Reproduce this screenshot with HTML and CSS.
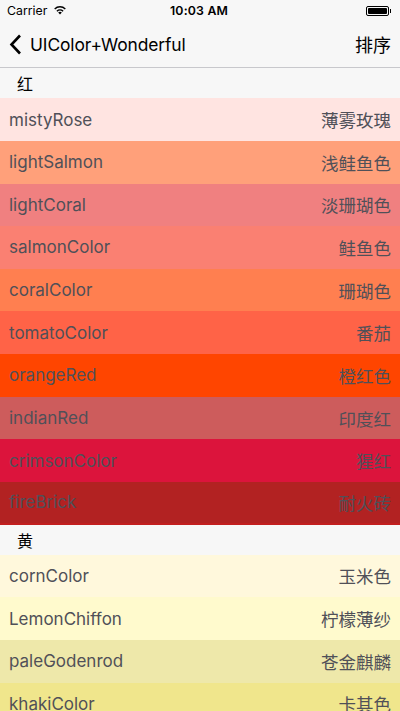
FILE: index.html
```html
<!DOCTYPE html>
<html lang="zh">
<head>
<meta charset="utf-8">
<link rel="stylesheet" href="styles.css">
</head>
<body>
<div class="screen">
  <div class="statusbar">
    <div class="sb-left">
      <span class="carrier">Carrier</span>
      <svg class="wifi" width="14" height="10" viewBox="0 0 14 10">
        <path d="M7 9.6 L5.2 7.6 A2.6 2.6 0 0 1 8.8 7.6 Z" fill="#000"/>
        <path d="M3.4 5.7 A5.2 5.2 0 0 1 10.6 5.7 L9.6 6.8 A3.8 3.8 0 0 0 4.4 6.8 Z" fill="#000"/>
        <path d="M1.2 3.4 A8.3 8.3 0 0 1 12.8 3.4 L11.8 4.5 A6.9 6.9 0 0 0 2.2 4.5 Z" fill="#000"/>
      </svg>
    </div>
    <div class="sb-time">10:03 AM</div>
    <div class="sb-right">
      <span class="battery"><span class="battery-fill"></span></span><span class="battery-nub"></span>
    </div>
  </div>
  <div class="navbar">
    <div class="nav-back">
      <svg class="chev" width="13" height="21" viewBox="0 0 13 21">
        <path d="M11 1.5 L2.5 10.5 L11 19.5" fill="none" stroke="#000" stroke-width="2.6"/>
      </svg>
      <span class="nav-title">UIColor+Wonderful</span>
    </div>
    <span class="nav-action">排序</span>
  </div>
  <div class="list">
    <div class="section-header">红</div>
    <div class="row c-mistyrose"><span>mistyRose</span><span class="cn">薄雾玫瑰</span></div>
    <div class="row c-lightsalmon"><span>lightSalmon</span><span class="cn">浅鲑鱼色</span></div>
    <div class="row c-lightcoral"><span>lightCoral</span><span class="cn">淡珊瑚色</span></div>
    <div class="row c-salmon"><span>salmonColor</span><span class="cn">鲑鱼色</span></div>
    <div class="row c-coral"><span>coralColor</span><span class="cn">珊瑚色</span></div>
    <div class="row c-tomato"><span>tomatoColor</span><span class="cn">番茄</span></div>
    <div class="row c-orangered"><span>orangeRed</span><span class="cn">橙红色</span></div>
    <div class="row c-indianred"><span>indianRed</span><span class="cn">印度红</span></div>
    <div class="row c-crimson"><span>crimsonColor</span><span class="cn">猩红</span></div>
    <div class="row c-firebrick last"><span>fireBrick</span><span class="cn">耐火砖</span></div>
    <div class="section-header">黄</div>
    <div class="row c-corn"><span>cornColor</span><span class="cn">玉米色</span></div>
    <div class="row c-lemon"><span>LemonChiffon</span><span class="cn">柠檬薄纱</span></div>
    <div class="row c-palegoldenrod"><span>paleGodenrod</span><span class="cn">苍金麒麟</span></div>
    <div class="row c-khaki"><span>khakiColor</span><span class="cn">卡其色</span></div>
  </div>
</div>
</body>
</html>
```

FILE: styles.css
```css
* { box-sizing: border-box; }
html, body { margin: 0; padding: 0; }
body {
  width: 400px;
  height: 711px;
  overflow: hidden;
  background: #fff;
  font-family: "Inter", "Liberation Sans", "Noto Sans CJK SC", sans-serif;
}
.screen { width: 400px; height: 711px; overflow: hidden; display: flex; flex-direction: column; }
.screen > * { flex-shrink: 0; }
.statusbar {
  height: 21.3px;
  background: #f7f7f7;
  display: flex;
  align-items: center;
  justify-content: space-between;
  padding: 0 9px 0 7px;
  font-size: 12.3px;
  color: #000;
}
.sb-left { display: flex; align-items: center; gap: 6px; width: 100px; }
.wifi { margin-top: -1px; }
.sb-time { font-weight: 600; letter-spacing: 0.2px; }
.sb-right { display: flex; align-items: center; justify-content: flex-end; width: 100px; }
.battery {
  width: 23px; height: 10px;
  border: 1px solid #000;
  border-radius: 2px;
  padding: 1px;
  display: flex;
}
.battery-fill { flex: 1; background: #000; border-radius: 1px; }
.battery-nub { width: 1.5px; height: 4px; background: #000; margin-left: 0.5px; }
.navbar {
  height: 47px;
  background: #f7f7f7;
  border-bottom: 1px solid #c8c8cc;
  display: flex;
  align-items: center;
  justify-content: space-between;
  padding: 0 9px 0 9px;
}
.nav-back { display: flex; align-items: center; gap: 8px; }
.chev { margin-top: 1px; }
.nav-title { font-size: 17.4px; color: #000; letter-spacing: -0.1px; }
.nav-action { font-size: 18px; color: #000; font-family: "Noto Sans CJK SC", sans-serif; }
.list { display: flex; flex-direction: column; }
.list > * { flex-shrink: 0; }
.section-header {
  height: 29.9px;
  background: #f7f7f7;
  padding-left: 17px;
  display: flex;
  align-items: center;
  font-size: 16px;
  color: #000;
  font-family: "Noto Sans CJK SC", sans-serif;
}
.row {
  height: 42.67px;
  display: flex;
  align-items: center;
  justify-content: space-between;
  padding: 0 9px;
  font-size: 17px;
  color: #505058;
}
.row .cn { font-family: "Noto Sans CJK SC", sans-serif; font-size: 17.5px; }
.row.last { border-bottom: 2px solid #c21f1f; }
.c-mistyrose { background: #ffe4e1; }
.c-lightsalmon { background: #ffa07a; }
.c-lightcoral { background: #f08080; }
.c-salmon { background: #fa8072; }
.c-coral { background: #ff7f50; }
.c-tomato { background: #ff6347; }
.c-orangered { background: #ff4500; }
.c-indianred { background: #cd5c5c; }
.c-crimson { background: #dc143c; }
.c-firebrick { background: #b22222; }
.c-corn { background: #fff8dc; }
.c-lemon { background: #fffacd; }
.c-palegoldenrod { background: #eee8aa; }
.c-khaki { background: #f0e68c; }
```
